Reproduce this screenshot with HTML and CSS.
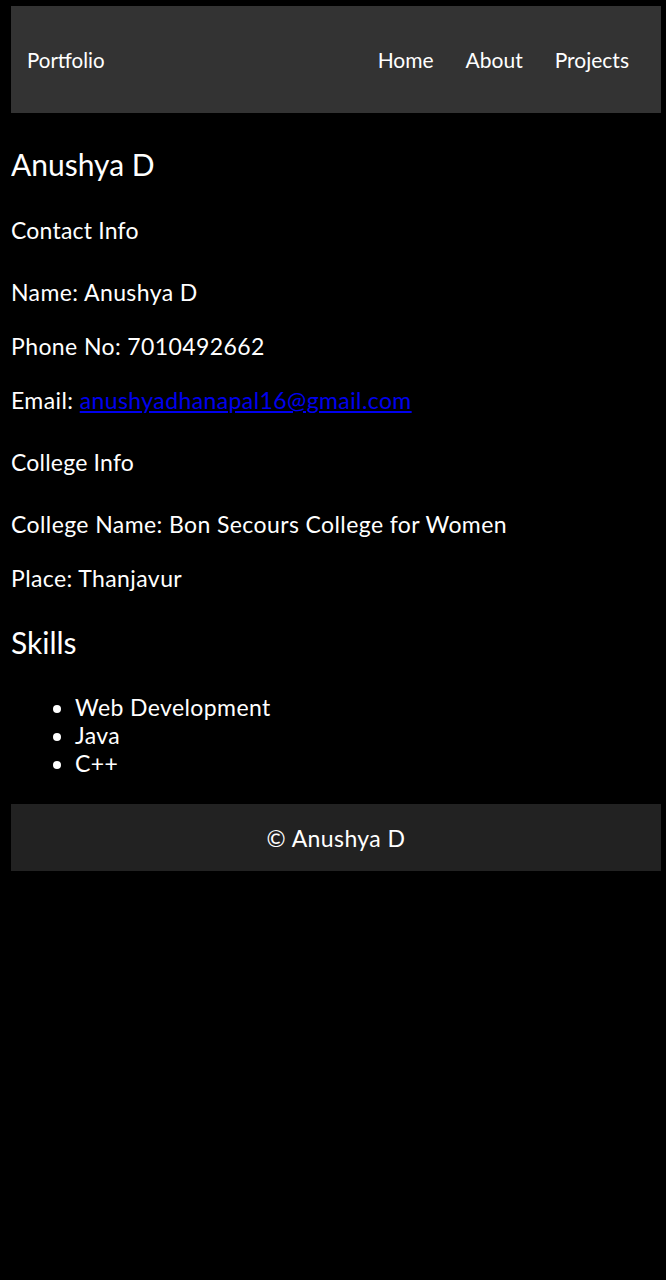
FILE: index.html
```html
<!DOCTYPE html>
<html>
<head>
<meta charset="utf-8">
<link rel="stylesheet" href="styles.css">
</head>
<body>
<header class="topbar">
  <div class="brand">Portfolio</div>
  <nav class="nav">
    <a href="#">Home</a>
    <a href="#">About</a>
    <a href="#">Projects</a>
  </nav>
</header>
<main class="content">
  <h1 class="title">Anushya D</h1>
  <h3 class="sub first">Contact Info</h3>
  <p class="line lead">Name: Anushya D</p>
  <p class="line">Phone No: 7010492662</p>
  <p class="line">Email: <a class="mail" href="#">anushyadhanapal16@gmail.com</a></p>
  <h3 class="sub">College Info</h3>
  <p class="line lead">College Name: Bon Secours College for Women</p>
  <p class="line">Place: Thanjavur</p>
  <h2 class="title skills">Skills</h2>
  <ul class="list">
    <li>Web Development</li>
    <li>Java</li>
    <li>C++</li>
  </ul>
</main>
<footer class="foot">© Anushya D</footer>
</body>
</html>
```
FILE: styles.css
```css
html, body {
  background: #000;
}
body {
  margin: 6px 5px 0 11px;
  color: #fff;
  font-family: Lato, "Open Sans", sans-serif;
}
.topbar {
  height: 107px;
  background: #333;
  display: flex;
  align-items: center;
  justify-content: space-between;
  padding: 0 32px 0 16px;
}
.brand {
  font-size: 20.5px;
}
.nav {
  display: flex;
  gap: 32px;
}
.nav a {
  color: #fff;
  text-decoration: none;
  font-size: 21px;
}
.content {
  display: flex;
  flex-direction: column;
}
.title {
  font-size: 30px;
  line-height: 36px;
  font-weight: normal;
  margin: 33px 0 0;
}
.sub {
  font-size: 23px;
  line-height: 28px;
  font-weight: normal;
  margin: 34px 0 0;
  letter-spacing: 0.2px;
}
.line {
  font-size: 23px;
  line-height: 28px;
  margin: 26px 0 0;
  letter-spacing: 0.4px;
}
.line.lead {
  margin-top: 34px;
}
.mail {
  color: #0000ee;
}
.skills {
  margin-top: 32px;
}
.list {
  margin: 33px 0 0;
  padding-left: 64px;
  font-size: 23px;
  line-height: 28px;
  letter-spacing: 0.4px;
}
.foot {
  margin-top: 27px;
  height: 67px;
  background: #222;
  display: flex;
  align-items: center;
  justify-content: center;
  font-size: 23px;
  letter-spacing: 0.4px;
}
```
